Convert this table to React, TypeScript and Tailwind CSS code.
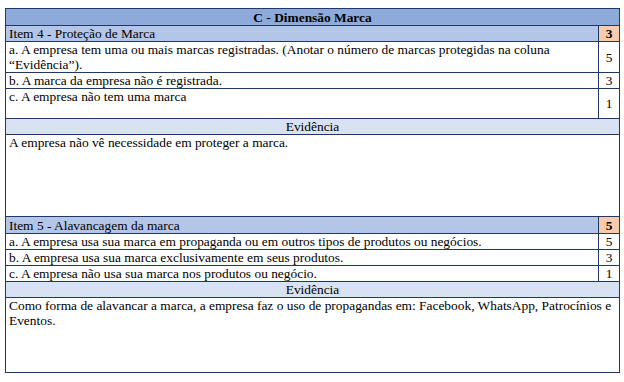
import React from "react";

const B = "border border-[#1f3864]";

function ItemRow({ text, score, h }: { text: React.ReactNode; score: string; h: string }) {
  return (
    <tr className={h}>
      <td className={`${B} align-top pl-[3px] pr-1 leading-[15px]`}>{text}</td>
      <td className={`${B} align-middle text-center leading-[15px]`}>{score}</td>
    </tr>
  );
}

export default function App() {
  return (
    <div className="w-[624px] h-[382px] bg-white pt-[8px] pl-[5px] font-['Liberation_Serif',serif]">
      <table className="w-[614px] border-collapse table-fixed text-[13.4px] text-black font-['Liberation_Serif',serif]">
        <colgroup>
          <col className="w-[593px]" />
          <col className="w-[21px]" />
        </colgroup>
        <tbody>
          <tr className="h-[17px]">
            <td colSpan={2} className={`${B} bg-[#8eaadb] text-center font-bold leading-[15px]`}>C - Dimensão Marca</td>
          </tr>
          <tr className="h-[16px]">
            <td className={`${B} bg-[#b4c6e7] pl-[3px] leading-[15px]`}>Item 4 - Proteção de Marca</td>
            <td className={`${B} bg-[#f8cbad] text-center font-bold leading-[15px]`}>3</td>
          </tr>
          <ItemRow h="h-[31px]" text={<>a. A empresa tem uma ou mais marcas registradas. (Anotar o número de marcas protegidas na coluna “Evidência”).</>} score="5" />
          <ItemRow h="h-[16px]" text="b. A marca da empresa não é registrada." score="3" />
          <ItemRow h="h-[30px]" text="c. A empresa não tem uma marca" score="1" />
          <tr className="h-[16px]">
            <td colSpan={2} className={`${B} bg-[#d9e2f3] text-center leading-[15px]`}>Evidência</td>
          </tr>
          <tr className="h-[82px]">
            <td colSpan={2} className={`${B} align-top pl-[3px] leading-[15px]`}>A empresa não vê necessidade em proteger a marca.</td>
          </tr>
          <tr className="h-[17px]">
            <td className={`${B} bg-[#b4c6e7] pl-[3px] leading-[15px]`}>Item 5 - Alavancagem da marca</td>
            <td className={`${B} bg-[#f8cbad] text-center font-bold leading-[15px]`}>5</td>
          </tr>
          <ItemRow h="h-[16px]" text="a. A empresa usa sua marca em propaganda ou em outros tipos de produtos ou negócios." score="5" />
          <ItemRow h="h-[16px]" text="b. A empresa usa sua marca exclusivamente em seus produtos." score="3" />
          <ItemRow h="h-[16px]" text="c. A empresa não usa sua marca nos produtos ou negócio." score="1" />
          <tr className="h-[16px]">
            <td colSpan={2} className={`${B} bg-[#d9e2f3] text-center leading-[15px]`}>Evidência</td>
          </tr>
          <tr className="h-[75px]">
            <td colSpan={2} className={`${B} align-top pl-[3px] leading-[15px]`}>Como forma de alavancar a marca, a empresa faz o uso de propagandas em: Facebook, WhatsApp, Patrocínios e Eventos.</td>
          </tr>
        </tbody>
      </table>
    </div>
  );
}
